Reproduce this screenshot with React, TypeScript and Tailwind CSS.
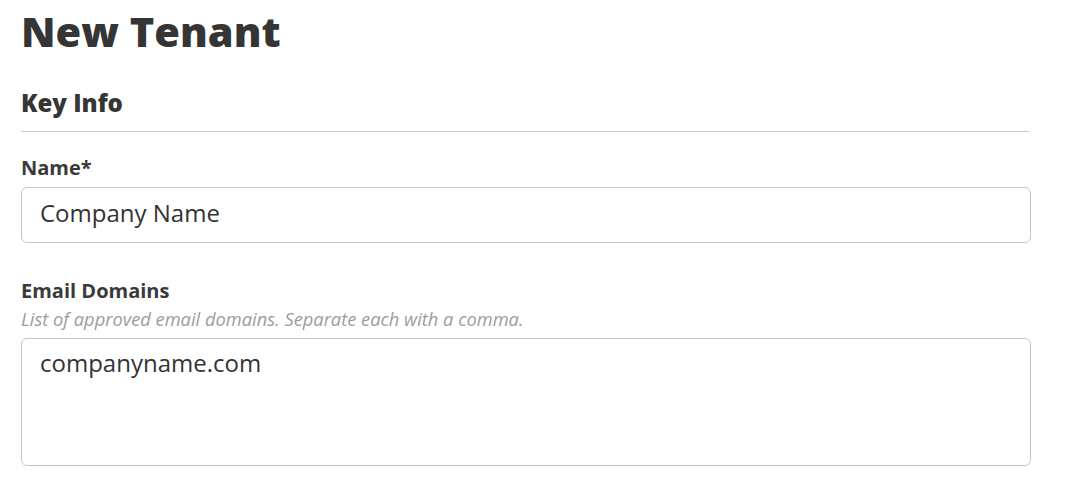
import React from 'react'

const font = { fontFamily: '"Open Sans", "Noto Sans", sans-serif' }

function Field({ label, hint, value, tall }: { label: string; hint?: string; value: string; tall?: boolean }) {
  return (
    <div className="flex flex-col">
      <label className="text-[20px] leading-none font-bold text-[#3a3a3a]">{label}</label>
      {hint && (
        <p className="mt-[9px] text-[18.3px] leading-[18px] italic text-[#9d9d9d]">{hint}</p>
      )}
      <div
        className={
          'rounded-[6px] border border-[#c6c6c6] bg-white px-[18px] text-[24px] leading-none text-[#333] ' +
          (tall ? 'mt-[10px] h-[128px] pt-[12px]' : 'mt-[9px] h-[56px] pt-[13px]')
        }
      >
        {value}
      </div>
    </div>
  )
}

export default function App() {
  return (
    <div className="min-h-screen bg-white" style={font}>
      <div className="w-[1010px] pl-[21px] box-content">
        <h1 className="pt-[11px] text-[41.5px] leading-[41px] font-extrabold text-[#353535]">New Tenant</h1>

        <h2 className="mt-[39px] text-[24px] leading-none font-extrabold text-[#353535]">Key Info</h2>
        <div className="mt-[16px] h-px w-[1008px] bg-[#c8c8c8]" />

        <div className="mt-[26px]">
          <Field label="Name*" value="Company Name" />
        </div>

        <div className="mt-[38px]">
          <Field
            label="Email Domains"
            hint="List of approved email domains. Separate each with a comma."
            value="companyname.com"
            tall
          />
        </div>
      </div>
    </div>
  )
}
